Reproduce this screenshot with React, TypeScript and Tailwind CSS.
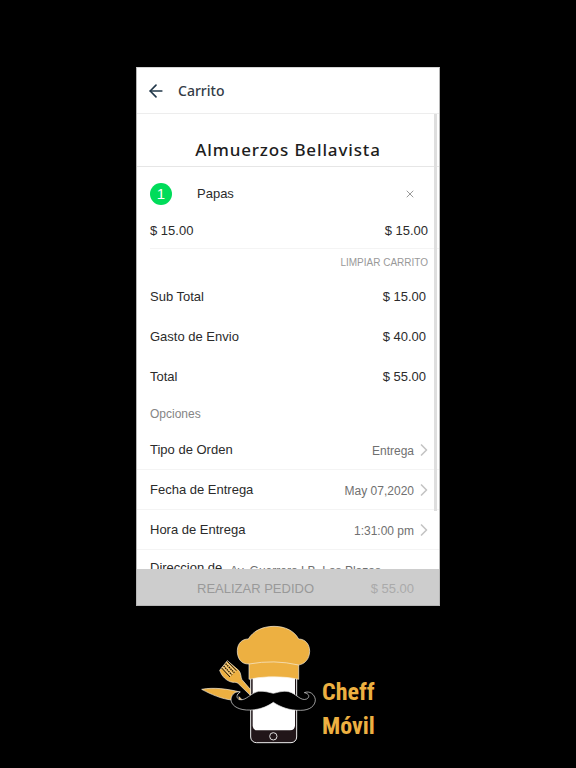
import { ArrowLeft, ChevronRight, X } from "lucide-react";

const totals = [
  { label: "Sub Total", value: "$ 15.00" },
  { label: "Gasto de Envio", value: "$ 40.00" },
  { label: "Total", value: "$ 55.00" },
];

const options = [
  { label: "Tipo de Orden", value: "Entrega" },
  { label: "Fecha de Entrega", value: "May 07,2020" },
  { label: "Hora de Entrega", value: "1:31:00 pm" },
];

function Logo() {
  return (
    <svg viewBox="15 0 354 390" className="h-[130px] w-[118px] shrink-0" aria-hidden="true">
      <rect x="167" y="120" width="138" height="248" rx="17" fill="#211619" stroke="#eee" strokeWidth="3" />
      <path d="M173 150H300V316Q300 331 285 331H188Q173 331 173 316Z" fill="#fff" />
      <circle cx="235" cy="349" r="11" fill="none" stroke="#ddd" strokeWidth="3" />
      <g fill="#edb041" stroke="#f8eedc" strokeWidth="2" strokeLinejoin="round">
        <path d="M162 178V132C137 133 126 113 127 91C128 70 141 57 160 57C174 33 203 19 237 19C271 19 298 33 311 57C331 57 344 73 344 94C343 117 330 132 311 135V178C266 168 207 168 162 178Z" />
        <path d="M162 132Q237 118 311 135" fill="none" />
        <path d="M97 122L74 151C80 168 94 184 114 187C120 187 125 187 129 190L166 226V208L141 179C137 172 139 160 131 151Z" />
        <path d="M20 208C56 201 99 207 135 216L110 240C80 237 48 223 20 208Z" />
        <path d="M132 240V230L142 240Z" />
      </g>
      <path d="M80 144L105 171M97 124L124 152" fill="none" stroke="#111" strokeWidth="3" />
      <path d="M86 138L111 165M92 131L118 158" fill="none" stroke="#111" strokeWidth="4" strokeDasharray="4 3" />
      <path d="M83 141L108 168M89 135L114 162M95 128L121 155" fill="none" stroke="#f8eedc" strokeWidth="2" />
      <path
        d="M235 247C215 261 187 272 154 270C125 268 107 254 108 237C110 222 122 213 136 216C124 222 122 235 134 239C153 243 168 218 191 214C209 212 224 218 235 220C247 218 262 211 281 215C302 219 317 245 335 237C346 231 342 220 328 218C344 211 359 223 361 239C361 257 345 271 317 271C284 272 256 261 235 247Z"
        fill="#000"
        stroke="#e8e8e8"
        strokeWidth="2"
      />
    </svg>
  );
}

export default function App() {
  return (
    <main className="flex min-h-screen flex-col items-center bg-black px-4 pt-[67px] font-['Liberation_Sans',Arial,sans-serif] text-[#2b2b2b]">
      <section className="w-full max-w-[304px] border border-[#b5b5b5] border-t-[#d5d5d5] bg-white">
        <header className="flex h-[46px] items-center gap-3 border-b border-[#ededed] pt-px pl-[9px]">
          <button type="button" aria-label="Volver" className="text-[#22384a]">
            <ArrowLeft size={20} strokeWidth={2} />
          </button>
          <h1 className="font-['Noto_Sans',sans-serif] text-sm font-medium text-[#333c47]">Carrito</h1>
        </header>

        <div className="relative h-[455px] overflow-hidden">
          <div className="absolute top-0 right-[2px] h-[397px] w-[3px] bg-[#dedede]" />

          <h2 className="flex h-[53px] items-end justify-center border-b border-[#e6e6e6] pb-[3px] font-['Noto_Sans',sans-serif] text-[17px] leading-[26px] font-medium tracking-wider text-[#1d1d1d]">
            Almuerzos Bellavista
          </h2>

          <div className="ml-[13px] border-b border-[#f4f4f4] pr-[11px]">
            <div className="flex h-[54px] items-center">
              <span className="flex size-[22px] items-center justify-center rounded-full bg-[#00dc5a] text-[15px] text-white">
                1
              </span>
              <span className="ml-[25px] flex-1 text-[13px]">Papas</span>
              <button type="button" aria-label="Quitar Papas" className="mr-3 text-[#999]">
                <X size={12} strokeWidth={2} />
              </button>
            </div>
            <div className="flex h-[27px] justify-between text-[13px] leading-5">
              <span>$ 15.00</span>
              <span>$ 15.00</span>
            </div>
          </div>

          <div className="flex h-7 items-center justify-end pr-[11px] pb-[2px]">
            <button type="button" className="text-[10px] text-[#999]">LIMPIAR CARRITO</button>
          </div>

          <dl className="pr-[13px] pl-[13px] text-[13px]">
            {totals.map((row) => (
              <div key={row.label} className="flex h-10 items-center justify-between">
                <dt>{row.label}</dt>
                <dd>{row.value}</dd>
              </div>
            ))}
          </dl>

          <h3 className="flex h-[33px] items-center pl-[13px] text-xs text-[#858585]">Opciones</h3>

          {options.map((row) => (
            <button
              key={row.label}
              type="button"
              className="flex h-10 w-full items-center border-b border-[#f4f4f4] pr-[5px] pl-[13px] text-left"
            >
              <span className="flex-1 text-[13px]">{row.label}</span>
              <span className="pt-[2px] text-xs text-[#707070]">{row.value}</span>
              <ChevronRight size={20} strokeWidth={2} className="text-[#c4c4c4]" />
            </button>
          ))}

          <button type="button" className="flex w-full items-start pt-[10px] pl-[13px] text-left whitespace-nowrap">
            <span className="w-20 text-[13px] leading-4">Direccion de</span>
            <span className="flex-1 pt-[3px] text-xs leading-4 text-[#707070]">Av. Guerrero LB. Las Plazas</span>
          </button>
        </div>

        <button
          type="button"
          disabled
          className="flex h-9 w-full items-center justify-between bg-[#cdcdcd] pt-[3px] pr-[25px] pl-[60px] text-[13px] text-[#999]"
        >
          <span>REALIZAR PEDIDO</span>
          <span className="text-[#aaa]">$ 55.00</span>
        </button>
      </section>

      <footer className="mt-[14px] flex items-center justify-center gap-1">
        <Logo />
        <p className="w-[54px] pt-12 font-['Roboto_Condensed','Open_Sans_Condensed',Roboto,sans-serif] text-2xl leading-[34px] font-bold text-[#edb041]">
          Cheff
          <br />
          Móvil
        </p>
      </footer>
    </main>
  );
}
